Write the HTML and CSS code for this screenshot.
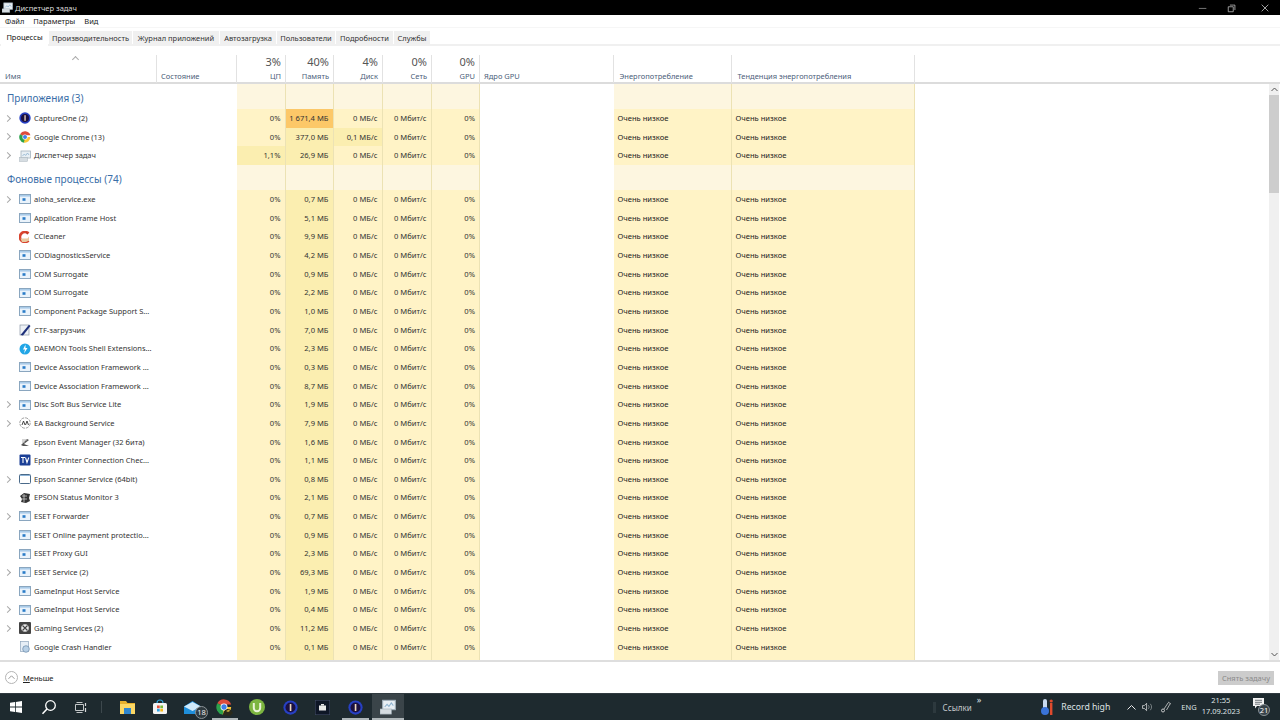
FILE: index.html
```html
<!DOCTYPE html>
<html lang="ru">
<head>
<meta charset="utf-8">
<title>Диспетчер задач</title>
<link rel="stylesheet" href="styles.css">
</head>
<body>
<svg class="defs" width="0" height="0" aria-hidden="true">
  <symbol id="exe" viewBox="0 0 12 12"><rect x=".5" y="1.5" width="11" height="9" fill="#eaf3fb" stroke="#8aa6bf"/><rect x="1" y="2" width="10" height="1.6" fill="#a9cbe8"/><rect x="3.5" y="5.2" width="3" height="2.6" fill="#2a7cc8"/></symbol>
  <symbol id="tm" viewBox="0 0 12 12"><rect x="2" y="1" width="9.500" height="7" fill="#e8eff4" stroke="#a3b2bd" stroke-width=".8"/><path d="M3.500 6l1.800-2 1.400 1.500L8.500 3l1.500 2" fill="none" stroke="#8fb4d0" stroke-width=".8"/><rect x="0" y="7.500" width="8.500" height="3.800" fill="#d6dde2" stroke="#a3b0b8" stroke-width=".5"/></symbol>
  <symbol id="c1" viewBox="0 0 12 12"><circle cx="6" cy="6" r="5.700" fill="#2740c4"/><circle cx="6" cy="6" r="4" fill="#1c1040"/><rect x="5.400" y="3.200" width="1.300" height="5.600" fill="#efd9c0"/></symbol>
  <symbol id="chrome" viewBox="0 0 12 12"><path d="M6 6L1 3.200A5.700 5.700 0 0 1 11.400 4.200H6z" fill="#dd4c3d"/><path d="M6 6l-5-2.800A5.700 5.700 0 0 0 5 11.700L7.600 7z" fill="#2ba24c"/><path d="M6 6h5.400A5.700 5.700 0 0 1 5 11.700z" fill="#fbc735"/><circle cx="6" cy="6" r="2.600" fill="#fff"/><circle cx="6" cy="6" r="2" fill="#3f80ea"/></symbol>
</svg>

<div class="window">
  <header class="titlebar">
    <svg class="title-icon" width="12" height="12"><use href="#tm"/></svg>
    <span class="title-text">Диспетчер задач</span>
    <div class="win-buttons">
      <svg width="12" height="12" viewBox="0 0 12 12"><path d="M1 6.500h9" stroke="#8d8d8d"/></svg>
      <svg width="12" height="12" viewBox="0 0 12 12"><path d="M3.500 2.500h6v6M1.500 4.500h6v6h-6z" fill="none" stroke="#c8c8c8" stroke-width=".9"/></svg>
      <svg width="12" height="12" viewBox="0 0 12 12"><path d="M2 2l8 8M10 2l-8 8" stroke="#d8d8d8" stroke-width=".9"/></svg>
    </div>
  </header>

  <nav class="menu"><span>Файл</span><span>Параметры</span><span>Вид</span></nav>

  <div class="tabs">
    <span class="tab active t1">Процессы</span>
    <span class="tab t2">Производительность</span>
    <span class="tab t3">Журнал приложений</span>
    <span class="tab t4">Автозагрузка</span>
    <span class="tab t5">Пользователи</span>
    <span class="tab t6">Подробности</span>
    <span class="tab t7">Службы</span>
  </div>

  <div class="head grid">
    <div class="h h-name"><span class="caret"></span><span class="lbl">Имя</span></div>
    <div class="h"><span class="lbl">Состояние</span></div>
    <div class="h r"><span class="pct">3%</span><span class="lbl">ЦП</span></div>
    <div class="h r"><span class="pct">40%</span><span class="lbl">Память</span></div>
    <div class="h r"><span class="pct">4%</span><span class="lbl">Диск</span></div>
    <div class="h r"><span class="pct">0%</span><span class="lbl">Сеть</span></div>
    <div class="h r"><span class="pct">0%</span><span class="lbl">GPU</span></div>
    <div class="h"><span class="lbl">Ядро GPU</span></div>
    <div class="h h-wide"><span class="lbl">Энергопотребление</span></div>
    <div class="h h-wide"><span class="lbl">Тенденция энергопотребления</span></div>
    <div class="h h-last"></div>
  </div>

  <div class="list-wrap">
    <div class="list">
      <div class="grid group g1"><div class="gt">Приложения (3)</div><i></i><b></b><b></b><b></b><b></b><b></b><i></i><b></b><b></b></div>
      <div class="grid row"><div class="n"><span class="exp"></span><svg class="ic"><use href="#c1"/></svg>CaptureOne (2)</div><i></i><b>0%</b><b class="hot">1 671,4 МБ</b><b>0 МБ/с</b><b>0 Мбит/с</b><b>0%</b><i></i><em>Очень низкое</em><em>Очень низкое</em></div>
      <div class="grid row"><div class="n"><span class="exp"></span><svg class="ic"><use href="#chrome"/></svg>Google Chrome (13)</div><i></i><b>0%</b><b class="warm">377,0 МБ</b><b class="warm">0,1 МБ/с</b><b>0 Мбит/с</b><b>0%</b><i></i><em>Очень низкое</em><em>Очень низкое</em></div>
      <div class="grid row"><div class="n"><span class="exp"></span><svg class="ic"><use href="#tm"/></svg>Диспетчер задач</div><i></i><b class="warm">1,1%</b><b class="warm">26,9 МБ</b><b>0 МБ/с</b><b>0 Мбит/с</b><b>0%</b><i></i><em>Очень низкое</em><em>Очень низкое</em></div>
      <div class="grid group"><div class="gt">Фоновые процессы (74)</div><i></i><b></b><b></b><b></b><b></b><b></b><i></i><b></b><b></b></div>
      <div class="grid row"><div class="n"><span class="exp"></span><svg class="ic"><use href="#exe"/></svg>aloha_service.exe</div><i></i><b>0%</b><b class="warm">0,7 МБ</b><b>0 МБ/с</b><b>0 Мбит/с</b><b>0%</b><i></i><em>Очень низкое</em><em>Очень низкое</em></div>
      <div class="grid row"><div class="n"><span class="noexp"></span><svg class="ic"><use href="#exe"/></svg>Application Frame Host</div><i></i><b>0%</b><b class="warm">5,1 МБ</b><b>0 МБ/с</b><b>0 Мбит/с</b><b>0%</b><i></i><em>Очень низкое</em><em>Очень низкое</em></div>
      <div class="grid row"><div class="n"><span class="noexp"></span><svg class="ic" viewBox="0 0 12 12"><path d="M9.500 2.500A5 5 0 1 0 9.500 9.500" fill="none" stroke="#d8442f" stroke-width="2.600"/><path d="M1.500 7.500h7l1.500-2v4l-3 1.500H3z" fill="#e8c9a0"/><path d="M7 1l2 1-1 1.500z" fill="#b03020"/></svg>CCleaner</div><i></i><b>0%</b><b class="warm">9,9 МБ</b><b>0 МБ/с</b><b>0 Мбит/с</b><b>0%</b><i></i><em>Очень низкое</em><em>Очень низкое</em></div>
      <div class="grid row"><div class="n"><span class="noexp"></span><svg class="ic"><use href="#exe"/></svg>CODiagnosticsService</div><i></i><b>0%</b><b class="warm">4,2 МБ</b><b>0 МБ/с</b><b>0 Мбит/с</b><b>0%</b><i></i><em>Очень низкое</em><em>Очень низкое</em></div>
      <div class="grid row"><div class="n"><span class="noexp"></span><svg class="ic"><use href="#exe"/></svg>COM Surrogate</div><i></i><b>0%</b><b class="warm">0,9 МБ</b><b>0 МБ/с</b><b>0 Мбит/с</b><b>0%</b><i></i><em>Очень низкое</em><em>Очень низкое</em></div>
      <div class="grid row"><div class="n"><span class="noexp"></span><svg class="ic"><use href="#exe"/></svg>COM Surrogate</div><i></i><b>0%</b><b class="warm">2,2 МБ</b><b>0 МБ/с</b><b>0 Мбит/с</b><b>0%</b><i></i><em>Очень низкое</em><em>Очень низкое</em></div>
      <div class="grid row"><div class="n"><span class="noexp"></span><svg class="ic"><use href="#exe"/></svg>Component Package Support S...</div><i></i><b>0%</b><b class="warm">1,0 МБ</b><b>0 МБ/с</b><b>0 Мбит/с</b><b>0%</b><i></i><em>Очень низкое</em><em>Очень низкое</em></div>
      <div class="grid row"><div class="n"><span class="noexp"></span><svg class="ic" viewBox="0 0 12 12"><rect x="1" y="1" width="9" height="10" fill="#eef2f6" stroke="#8a97a6" stroke-width=".7"/><path d="M1.500 11L10 .8l1.500 1.200L4 11.500z" fill="#1d2f7a"/></svg>CTF-загрузчик</div><i></i><b>0%</b><b class="warm">7,0 МБ</b><b>0 МБ/с</b><b>0 Мбит/с</b><b>0%</b><i></i><em>Очень низкое</em><em>Очень низкое</em></div>
      <div class="grid row"><div class="n"><span class="noexp"></span><svg class="ic" viewBox="0 0 12 12"><circle cx="6" cy="6" r="5.500" fill="#22a6e6"/><path d="M6.500 1.500L4 6.500h2L5 10.500 8.500 5h-2z" fill="#fff"/></svg>DAEMON Tools Shell Extensions...</div><i></i><b>0%</b><b class="warm">2,3 МБ</b><b>0 МБ/с</b><b>0 Мбит/с</b><b>0%</b><i></i><em>Очень низкое</em><em>Очень низкое</em></div>
      <div class="grid row"><div class="n"><span class="noexp"></span><svg class="ic"><use href="#exe"/></svg>Device Association Framework ...</div><i></i><b>0%</b><b class="warm">0,3 МБ</b><b>0 МБ/с</b><b>0 Мбит/с</b><b>0%</b><i></i><em>Очень низкое</em><em>Очень низкое</em></div>
      <div class="grid row"><div class="n"><span class="noexp"></span><svg class="ic"><use href="#exe"/></svg>Device Association Framework ...</div><i></i><b>0%</b><b class="warm">8,7 МБ</b><b>0 МБ/с</b><b>0 Мбит/с</b><b>0%</b><i></i><em>Очень низкое</em><em>Очень низкое</em></div>
      <div class="grid row"><div class="n"><span class="exp"></span><svg class="ic"><use href="#exe"/></svg>Disc Soft Bus Service Lite</div><i></i><b>0%</b><b class="warm">1,9 МБ</b><b>0 МБ/с</b><b>0 Мбит/с</b><b>0%</b><i></i><em>Очень низкое</em><em>Очень низкое</em></div>
      <div class="grid row"><div class="n"><span class="exp"></span><svg class="ic" viewBox="0 0 12 12"><circle cx="6" cy="6" r="5.200" fill="#fff" stroke="#777" stroke-width=".7" stroke-dasharray="3 1"/><path d="M3 8l1.500-4 1.500 4M6.500 8L8 4l1.500 4" fill="none" stroke="#333" stroke-width=".9"/></svg>EA Background Service</div><i></i><b>0%</b><b class="warm">7,9 МБ</b><b>0 МБ/с</b><b>0 Мбит/с</b><b>0%</b><i></i><em>Очень низкое</em><em>Очень низкое</em></div>
      <div class="grid row"><div class="n"><span class="noexp"></span><svg class="ic" viewBox="0 0 12 12"><path d="M2 9l6-6 2 1-5 4 5 2H4z" fill="#555"/><path d="M3 4h5M3 6h3" stroke="#aaa"/></svg>Epson Event Manager (32 бита)</div><i></i><b>0%</b><b class="warm">1,6 МБ</b><b>0 МБ/с</b><b>0 Мбит/с</b><b>0%</b><i></i><em>Очень низкое</em><em>Очень низкое</em></div>
      <div class="grid row"><div class="n"><span class="noexp"></span><svg class="ic" viewBox="0 0 12 12"><rect x=".5" y=".5" width="11" height="11" rx="1" fill="#1b3f96"/><path d="M2 3.500h4M4 3.500V9M6.500 3.500L8 8.500l1.800-5" fill="none" stroke="#fff" stroke-width="1.100"/></svg>Epson Printer Connection Chec...</div><i></i><b>0%</b><b class="warm">1,1 МБ</b><b>0 МБ/с</b><b>0 Мбит/с</b><b>0%</b><i></i><em>Очень низкое</em><em>Очень низкое</em></div>
      <div class="grid row"><div class="n"><span class="exp"></span><svg class="ic" viewBox="0 0 12 12"><rect x=".5" y="1.500" width="11" height="9" rx="1" fill="#fff" stroke="#4a6a8a"/><rect x="1" y="2" width="10" height="1" fill="#8db4d8"/></svg>Epson Scanner Service (64bit)</div><i></i><b>0%</b><b class="warm">0,8 МБ</b><b>0 МБ/с</b><b>0 Мбит/с</b><b>0%</b><i></i><em>Очень низкое</em><em>Очень низкое</em></div>
      <div class="grid row"><div class="n"><span class="noexp"></span><svg class="ic" viewBox="0 0 12 12"><path d="M1 4l4-3 6 1-1 4 1 3-4 2-5-1 1-3z" fill="#333"/><path d="M3 4h5M3 7h5M5 2v8" stroke="#ddd" stroke-width=".7"/></svg>EPSON Status Monitor 3</div><i></i><b>0%</b><b class="warm">2,1 МБ</b><b>0 МБ/с</b><b>0 Мбит/с</b><b>0%</b><i></i><em>Очень низкое</em><em>Очень низкое</em></div>
      <div class="grid row"><div class="n"><span class="exp"></span><svg class="ic"><use href="#exe"/></svg>ESET Forwarder</div><i></i><b>0%</b><b class="warm">0,7 МБ</b><b>0 МБ/с</b><b>0 Мбит/с</b><b>0%</b><i></i><em>Очень низкое</em><em>Очень низкое</em></div>
      <div class="grid row"><div class="n"><span class="noexp"></span><svg class="ic"><use href="#exe"/></svg>ESET Online payment protectio...</div><i></i><b>0%</b><b class="warm">0,9 МБ</b><b>0 МБ/с</b><b>0 Мбит/с</b><b>0%</b><i></i><em>Очень низкое</em><em>Очень низкое</em></div>
      <div class="grid row"><div class="n"><span class="noexp"></span><svg class="ic"><use href="#exe"/></svg>ESET Proxy GUI</div><i></i><b>0%</b><b class="warm">2,3 МБ</b><b>0 МБ/с</b><b>0 Мбит/с</b><b>0%</b><i></i><em>Очень низкое</em><em>Очень низкое</em></div>
      <div class="grid row"><div class="n"><span class="exp"></span><svg class="ic"><use href="#exe"/></svg>ESET Service (2)</div><i></i><b>0%</b><b class="warm">69,3 МБ</b><b>0 МБ/с</b><b>0 Мбит/с</b><b>0%</b><i></i><em>Очень низкое</em><em>Очень низкое</em></div>
      <div class="grid row"><div class="n"><span class="noexp"></span><svg class="ic"><use href="#exe"/></svg>GameInput Host Service</div><i></i><b>0%</b><b class="warm">1,9 МБ</b><b>0 МБ/с</b><b>0 Мбит/с</b><b>0%</b><i></i><em>Очень низкое</em><em>Очень низкое</em></div>
      <div class="grid row"><div class="n"><span class="exp"></span><svg class="ic"><use href="#exe"/></svg>GameInput Host Service</div><i></i><b>0%</b><b class="warm">0,4 МБ</b><b>0 МБ/с</b><b>0 Мбит/с</b><b>0%</b><i></i><em>Очень низкое</em><em>Очень низкое</em></div>
      <div class="grid row"><div class="n"><span class="exp"></span><svg class="ic" viewBox="0 0 12 12"><rect width="12" height="12" rx="1" fill="#444"/><circle cx="6" cy="6" r="3.800" fill="#e8e8e8"/><path d="M3.500 3.500l5 5M8.500 3.500l-5 5" stroke="#444" stroke-width="1.100"/></svg>Gaming Services (2)</div><i></i><b>0%</b><b class="warm">11,2 МБ</b><b>0 МБ/с</b><b>0 Мбит/с</b><b>0%</b><i></i><em>Очень низкое</em><em>Очень низкое</em></div>
      <div class="grid row"><div class="n"><span class="noexp"></span><svg class="ic" viewBox="0 0 12 12"><rect x="1.500" y=".5" width="8" height="10" fill="#e6eef6" stroke="#8fa6bd" stroke-width=".7"/><circle cx="7" cy="8" r="3.300" fill="#b8d0e6" stroke="#6a8aa8" stroke-width=".7"/></svg>Google Crash Handler</div><i></i><b>0%</b><b class="warm">0,1 МБ</b><b>0 МБ/с</b><b>0 Мбит/с</b><b>0%</b><i></i><em>Очень низкое</em><em>Очень низкое</em></div>
      <div class="grid row"><div class="n"></div><i></i><b></b><b class="warm"></b><b></b><b></b><b></b><i></i><em></em><em></em></div>
    </div>
    <div class="scrollbar">
      <span class="sb-btn"><svg width="7" height="5" viewBox="0 0 7 5"><path d="M.5 4l3-3 3 3" fill="none" stroke="#555"/></svg></span>
      <span class="sb-thumb"></span>
      <span class="sb-track"></span>
      <span class="sb-btn"><svg width="7" height="5" viewBox="0 0 7 5"><path d="M.5 1l3 3 3-3" fill="none" stroke="#555"/></svg></span>
    </div>
  </div>

  <footer class="footer">
    <div class="less">
      <svg width="13" height="13" viewBox="0 0 13 13"><circle cx="6.500" cy="6.500" r="6" fill="none" stroke="#b4b4b4"/><path d="M3.500 7.800l3-3 3 3" fill="none" stroke="#999"/></svg>
      <span><u>М</u>еньше</span>
    </div>
    <button class="endtask">Снять задачу</button>
  </footer>
</div>

<div class="taskbar">
  <div class="tb-left">
    <span class="tb"><svg width="12" height="12" viewBox="0 0 12 12"><path d="M0 1.700l5-.7v4.600H0zM5.800.9L12 0v5.600H5.800zM0 6.400h5V11l-5-.7zM5.800 6.400H12V12l-6.200-.9z" fill="#fff"/></svg></span>
    <span class="tb"><svg width="16" height="16" viewBox="0 0 16 16"><circle cx="9.500" cy="6.500" r="4.800" fill="none" stroke="#fff" stroke-width="1.300"/><path d="M6 10L1.500 14.800" stroke="#fff" stroke-width="1.500"/></svg></span>
    <span class="tb"><svg width="12" height="11" viewBox="0 0 12 11"><path d="M.5 2.500h8v6h-8zM1.500.5h6M1.500 10.500h6" fill="none" stroke="#d6d9da" stroke-width=".9"/><path d="M10.500 1v3M10.500 6v4" stroke="#d6d9da" stroke-width="1.200"/></svg></span>
    <span class="tb-sep"></span>
    <span class="tb"><svg width="15" height="13" viewBox="0 0 15 13"><path d="M0 0h6l1.500 2H15v11H0z" fill="#e6b02e"/><rect y="3" width="15" height="10" fill="#fbd764"/><rect x="4" y="7" width="7" height="6" fill="#2f86cf"/></svg></span>
    <span class="tb"><svg width="16" height="16" viewBox="0 0 16 16"><path d="M5 4a3 3 0 0 1 6 0" fill="none" stroke="#2ea7e0" stroke-width="1.100"/><rect x="1" y="4" width="14" height="11" rx="1.500" fill="#f3f3f3"/><rect x="5" y="6.500" width="2.700" height="2.700" fill="#e8503a"/><rect x="8.300" y="6.500" width="2.700" height="2.700" fill="#7ab93b"/><rect x="5" y="9.800" width="2.700" height="2.700" fill="#2fa4e7"/><rect x="8.300" y="9.800" width="2.700" height="2.700" fill="#f7b917"/></svg></span>
    <span class="tb"><svg width="17" height="13" viewBox="0 0 17 13"><path d="M0 5.500L8.500 0 17 5.500V13H0z" fill="#1f8fdb"/><path d="M0 5.500l8.500 4.500L17 5.500 8.500 1z" fill="#cfe9fa"/></svg><span class="badge">18</span></span>
    <span class="tb tb-on"><svg width="17" height="17" viewBox="0 0 17 17"><use href="#chrome" width="16" height="16"/><path d="M7 16c0-4 3-6 5-6s3 1 5 4l-3 3z" fill="#2a2a1c"/><path d="M10 12l3-1.500 1 1.500-2 1z" fill="#c8a83a"/></svg></span>
    <span class="tb"><svg width="16" height="16" viewBox="0 0 16 16"><circle cx="8" cy="8" r="8" fill="#7cb540"/><path d="M4.800 4v5a3.200 3.200 0 0 0 6.400 0V4" fill="none" stroke="#eaf4d8" stroke-width="2"/></svg></span>
    <span class="tb"><svg width="15" height="15"><use href="#c1"/></svg></span>
    <span class="tb"><svg width="15" height="15" viewBox="0 0 15 15"><rect width="15" height="15" fill="#0e1626" stroke="#46506a"/><rect x="4" y="5.500" width="7" height="5" fill="#e8e8e8"/><rect x="6" y="4" width="3" height="1.500" fill="#e8e8e8"/></svg></span>
    <span class="tb tb-on"><svg width="15" height="15"><use href="#c1"/></svg></span>
    <span class="tb tb-active"><svg width="16" height="16"><use href="#tm"/></svg></span>
  </div>
  <div class="tb-right">
    <span class="tb-links-sep"></span>
    <span class="links">Ссылки</span>
    <span class="chev">»</span>
    <svg class="thermo" width="13" height="16" viewBox="0 0 13 16"><rect x="2" y="0" width="4" height="12" rx="2" fill="#c9d9ee"/><circle cx="4" cy="12" r="4" fill="#3a73d8"/><rect x="9" y="4" width="2.400" height="12" fill="#e04a2d"/><circle cx="10.200" cy="2" r="1.600" fill="#e04a2d"/></svg>
    <span class="record">Record high</span>
    <svg class="tray-up" width="9" height="5" viewBox="0 0 9 5"><path d="M.5 4.500l4-4 4 4" fill="none" stroke="#e8e8e8"/></svg>
    <svg class="tray-vol" width="11" height="10" viewBox="0 0 12 10"><path d="M.5 3.500h2l2.500-2.500v8L2.500 6.500h-2z" fill="none" stroke="#e8e8e8" stroke-width=".8"/><path d="M7 3a3 3 0 0 1 0 4M9 1.500a5 5 0 0 1 0 7" fill="none" stroke="#9aa0a3" stroke-width=".8"/></svg>
    <svg class="tray-net" width="11" height="12" viewBox="0 0 11 12"><circle cx="2" cy="9.500" r="1.500" fill="none" stroke="#e8e8e8" stroke-width=".8"/><path d="M3 8l4-6M5.500 9L9 3M7 1l3 2" stroke="#d0d0d0" stroke-width=".8" fill="none"/></svg>
    <span class="eng">ENG</span>
    <span class="clock"><span>21:55</span><span>17.09.2023</span></span>
    <span class="notif"><svg width="12" height="11" viewBox="0 0 12 11"><path d="M0 0h11v8H4L2 10.500V8H0z" fill="#f2f2f2"/><path d="M2 2.300h7M2 4.300h7M2 6.200h5" stroke="#39444b" stroke-width=".7"/></svg><span class="nbadge">21</span></span>
  </div>
</div>
</body>
</html>
```
FILE: styles.css
```css
* { box-sizing: border-box; }
html, body { margin: 0; padding: 0; width: 1280px; height: 720px; overflow: hidden; background: #fff; }
body { font-family: "Noto Sans", "Open Sans", sans-serif; font-size: 7.500px; color: #1a1a1a; display: flex; flex-direction: column; }
.defs { position: absolute; }
.window { height: 693px; display: flex; flex-direction: column; }

.titlebar { height: 15px; background: #000; color: #dcdcdc; display: flex; align-items: center; padding-left: 2px; gap: 2px; flex: none; }
.title-icon { width: 11px; height: 11px; }
.win-buttons { margin-left: auto; display: flex; gap: 19px; margin-right: 10px; align-items: center; }
.win-buttons svg { width: 10px; height: 10px; }
.win-buttons svg:last-child { margin-left: 4px; }

.menu { height: 13px; display: flex; gap: 9px; padding-left: 5px; align-items: center; flex: none; color: #222; border-bottom: 1px solid #f6f6f6; }

.tabs { height: 18px; display: flex; gap: 1px; flex: none; border-bottom: 2px solid #f0f0f0; padding-left: 1px; align-items: flex-end; }
.tab { height: 13px; display: flex; align-items: center; justify-content: center; background: #f0f0f0; color: #333; }
.tab.active { background: #fff; height: 16px; margin-bottom: -2px; padding-bottom: 3px; color: #111; }
.t1 { width: 47px; } .t2 { width: 83px; } .t3 { width: 86px; } .t4 { width: 56px; } .t5 { width: 58px; } .t6 { width: 57px; } .t7 { width: 36px; }

.grid { display: grid; grid-template-columns: 157px 79.500px 49px 48px 49px 49px 48.500px 134px 118px 183px; }
.head { height: 38px; flex: none; border-bottom: 2px solid #dcdcdc; grid-template-columns: 157px 80px 49px 48px 49px 49px 48px 134px 118px 183px 1fr; padding-top: 9px; }
.h { border-right: 1px solid #e2e2e2; display: flex; flex-direction: column; justify-content: flex-end; padding: 0 4px 1.500px 4px; position: relative; }
.h.r { align-items: flex-end; }
.h-name { padding-left: 5px; }
.h-wide { padding-left: 5.500px; }
.h-last { border-right: 0; }
.lbl { color: #4c607a; line-height: 11px; }
.pct { font-size: 11px; line-height: 14px; color: #555; margin-bottom: 1.500px; }
.caret { position: absolute; left: 73px; top: 2px; width: 5px; height: 5px; border-top: 1px solid #aaa; border-left: 1px solid #aaa; transform: rotate(45deg); }

.list-wrap { flex: 1; min-height: 0; display: flex; overflow: hidden; }
.list { flex: 1; min-width: 0; overflow: hidden; }
.scrollbar { width: 10px; flex: none; background: #f0f0f0; display: flex; flex-direction: column; margin-right: 1px; }
.sb-btn { height: 11px; display: flex; align-items: center; justify-content: center; flex: none; }
.sb-thumb { height: 98px; background: #cdcdcd; flex: none; }
.sb-track { flex: 1; }

.row { height: 18.667px; line-height: 18.667px; }
.row > i, .group > i { display: block; }
.row > b { font-weight: 400; font-size: 7.600px; background: #fff3c6; border-right: 1px solid #ece2b4; text-align: right; padding-right: 4px; color: #333; }
.row > em { font-style: normal; font-size: 7.600px; background: #fff3c6; border-right: 1px solid #ece2b4; padding-left: 3.500px; color: #222; }
.row > b.warm { background: #fbeeb0; }
.row > b.hot { background: #fcc868; }
.n { display: flex; align-items: center; color: #333; white-space: nowrap; overflow: hidden; }
.exp, .noexp { width: 19px; flex: none; position: relative; height: 6px; }
.exp::after { content: ""; position: absolute; left: 5px; top: .5px; width: 4px; height: 4px; border-top: 1px solid #a8a8a8; border-right: 1px solid #a8a8a8; transform: rotate(45deg); }
.ic { width: 12px; height: 12px; flex: none; margin-right: 3px; }

.group { height: 25px; }
.group > b { background: #fdf6e0; border-right: 1px solid #ece2b4; display: block; }
.gt { font-size: 10px; color: #3a6ea8; line-height: 28px; padding-left: 7px; white-space: nowrap; }

.footer { height: 33px; flex: none; border-top: 2px solid #dedede; display: flex; align-items: center; justify-content: space-between; padding: 0 6px 0 5px; }
.less { display: flex; align-items: center; gap: 5px; color: #222; }
.less u { text-decoration: underline; }
.endtask { width: 56px; height: 14px; border: 0; padding: 0; background: #cccccc; color: #8a8a8a; font: inherit; }

.taskbar { height: 27px; flex: none; background: #1e2a2f; border-top: 1px solid #303a3f; display: flex; justify-content: space-between; color: #dfe3e4; font-size: 8px; }
.tb-left { display: flex; align-items: stretch; }
.tb { width: 32.600px; display: flex; align-items: center; justify-content: center; position: relative; flex: none; }
.tb-sep { width: 1px; height: 12px; background: #3d484d; align-self: center; margin: 0 9px 0 3px; flex: none; }
.badge { position: absolute; left: 19px; top: 12px; width: 13px; height: 13px; border-radius: 50%; background: #2f3a3f; border: 1px solid #8a9296; font-size: 7.500px; line-height: 11px; text-align: center; color: #eee; }
.tb-on::after { content: ""; position: absolute; left: 3px; right: 3px; bottom: 0; height: 2px; background: #aeb6b9; }
.tb-active { background: #3a4449; }
.tb-active::after { content: ""; position: absolute; left: 0; right: 0; bottom: 0; height: 2px; background: #aeb6b9; }

.tb-right { display: flex; align-items: center; padding-right: 10px; }
.tb-links-sep { width: 3px; height: 11px; background: #2d393e; margin-right: 7px; }
.links { color: #c8cdcf; }
.chev { font-size: 9px; align-self: flex-start; margin: 1px 60px 0 5px; line-height: 10px; }
.thermo { margin-right: 7px; }
.record { font-size: 8.700px; margin-right: 17px; }
.tray-up { margin-right: 6px; }
.tray-vol { margin-right: 8px; }
.tray-net { margin-right: 9px; }
.eng { margin-right: 5px; font-size: 7.500px; }
.clock { display: flex; flex-direction: column; align-items: center; line-height: 11.500px; margin-right: 13px; font-size: 7.500px; padding-bottom: 2px; }
.notif { position: relative; width: 17px; height: 18px; }
.notif svg { position: absolute; left: 0; top: 0; }
.nbadge { position: absolute; left: 5px; top: 6px; width: 12px; height: 12px; border-radius: 50%; background: #38434a; border: 1px solid #8a9296; font-size: 7.500px; line-height: 10px; text-align: center; color: #fff; }
```
